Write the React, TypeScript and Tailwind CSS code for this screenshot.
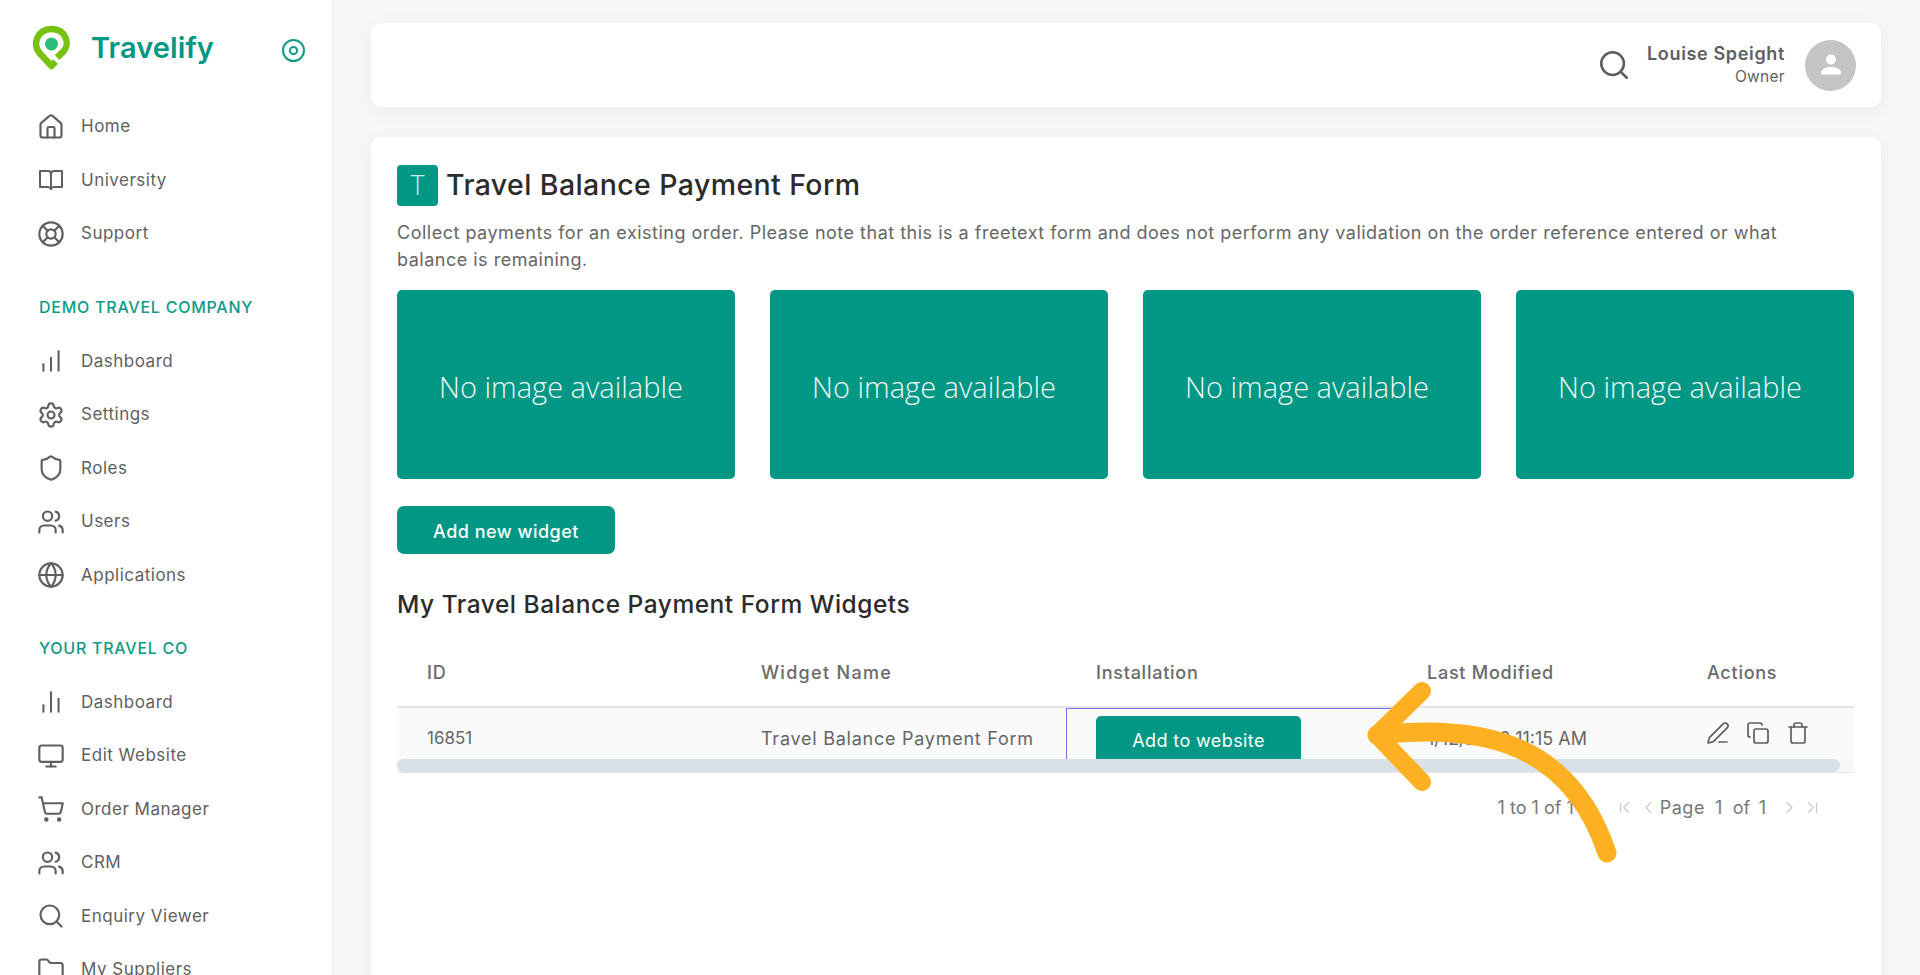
import React from "react";
import {
  House,
  LifeBuoy,
  ChartNoAxesColumn,
  ChartNoAxesColumnIncreasing,
  Settings,
  Shield,
  Users,
  Globe,
  Monitor,
  ShoppingCart,
  Search,
  Folder,
  PenLine,
  Copy,
  Trash,
  ChevronLeft,
  ChevronRight,
  ChevronFirst,
  ChevronLast,
} from "lucide-react";

function BookIcon() {
  return (
    <svg width="28" height="28" viewBox="0 0 28 28" fill="none" stroke="currentColor" strokeWidth="2" strokeLinejoin="round" strokeLinecap="round">
      <path d="M3 5h8c1.800 0 3 1.200 3 3v15c-.6-1.200-1.600-2-3-2H3z" />
      <path d="M25 5h-8c-1.800 0-3 1.200-3 3v15c.6-1.200 1.600-2 3-2h8z" />
    </svg>
  );
}

const NAV_ICON = { size: 28, strokeWidth: 1.85 };

function NavItem({ icon, label }: { icon: React.ReactNode; label: string }) {
  return (
    <div className="flex h-[53.5px] items-center pl-[37px] text-[#5f5f5f]">
      <span className="flex w-[44px] shrink-0 items-center">{icon}</span>
      <span className="text-[17px] tracking-[0.5px]">{label}</span>
    </div>
  );
}

function SectionTitle({ children }: { children: React.ReactNode }) {
  return (
    <div className="flex h-[53.5px] items-center pb-[2px] pl-[39px] text-[16px] font-medium tracking-[0.75px] text-[#0f9a87]">
      {children}
    </div>
  );
}

function Sidebar() {
  return (
    <aside className="h-[975px] w-[331px] shrink-0 overflow-hidden bg-white">
      <div className="flex h-[100px] items-start pl-[33px] pt-[26px]">
        <svg className="overflow-visible" width="37" height="44" viewBox="0 0 37 44" fill="none">
          <path d="M22.5 35.500 L18.5 40 L6.500 27 C-1 18 4.500 3 18.5 3 C32.500 3 38 18 30 26 L24 31.500" stroke="#76c20e" strokeWidth="6.5" strokeLinejoin="round" />
          <circle cx="18.5" cy="18" r="6.5" fill="#2dbd7a" />
        </svg>
        <span className="ml-[21px] mt-[3px] text-[29px] font-semibold leading-[38px] tracking-[0.1px] text-[#009784]">Travelify</span>
        <svg className="ml-[67px] mt-[12px]" width="25" height="25" viewBox="0 0 25 25" fill="none" stroke="#0f9a87" strokeWidth="2">
          <circle cx="12.5" cy="12.5" r="10.5" />
          <circle cx="12.5" cy="12.5" r="3.6" />
        </svg>
      </div>

      <NavItem icon={<House {...NAV_ICON} />} label="Home" />
      <NavItem icon={<BookIcon />} label="University" />
      <NavItem icon={<LifeBuoy {...NAV_ICON} />} label="Support" />

      <div className="mt-[20.500px]">
        <SectionTitle>DEMO TRAVEL COMPANY</SectionTitle>
      </div>
      <NavItem icon={<ChartNoAxesColumnIncreasing size={26} strokeWidth={1.9} className="ml-px" />} label="Dashboard" />
      <NavItem icon={<Settings {...NAV_ICON} />} label="Settings" />
      <NavItem icon={<Shield {...NAV_ICON} />} label="Roles" />
      <NavItem icon={<Users {...NAV_ICON} />} label="Users" />
      <NavItem icon={<Globe {...NAV_ICON} />} label="Applications" />

      <div className="mt-[20px]">
        <SectionTitle>YOUR TRAVEL CO</SectionTitle>
      </div>
      <NavItem icon={<ChartNoAxesColumn size={26} strokeWidth={1.9} className="ml-px" />} label="Dashboard" />
      <NavItem icon={<Monitor {...NAV_ICON} />} label="Edit Website" />
      <NavItem icon={<ShoppingCart {...NAV_ICON} />} label="Order Manager" />
      <NavItem icon={<Users {...NAV_ICON} />} label="CRM" />
      <NavItem icon={<Search {...NAV_ICON} />} label="Enquiry Viewer" />
      <NavItem icon={<Folder {...NAV_ICON} />} label="My Suppliers" />
    </aside>
  );
}

function Header() {
  return (
    <header className="flex h-[84px] items-center justify-end rounded-[10px] bg-white pr-[25px] shadow-[0_4px_20px_rgba(0,0,0,0.05)]">
      <Search size={34} strokeWidth={1.8} className="text-[#5c5c5c]" />
      <div className="ml-[16px] text-right text-[#5f5f5f]">
        <div className="text-[18px] font-semibold leading-[24px] tracking-[0.65px]">Louise Speight</div>
        <div className="text-[15.5px] leading-[22px] tracking-[0.3px]">Owner</div>
      </div>
      <div className="ml-[20px] flex h-[51px] w-[51px] items-center justify-center rounded-full bg-[#c4c4c4]">
        <svg width="26" height="26" viewBox="0 0 26 26" fill="white">
          <circle cx="13" cy="7.5" r="5" />
          <path d="M3 21c0-4 5-6 10-6s10 2 10 6c0 1-.6 1.500-1.500 1.500h-17C3.600 22.500 3 22 3 21z" />
        </svg>
      </div>
    </header>
  );
}

function ImageTile() {
  return (
    <div className="flex h-[189px] items-center justify-center rounded-[5px] bg-[#009784] pr-[10px] pt-[4px] text-[29px] font-light text-[#eef8f6] [font-family:'Open_Sans',sans-serif]">
      No image available
    </div>
  );
}

const HEAD_CELL = "text-[18px] font-medium tracking-[0.75px] text-[#6a6a6a]";

function WidgetTable() {
  return (
    <div className="relative mt-[20px]">
      <div className="flex h-[70px] items-center border-b-2 border-[#e6e6e6] pl-[30px]">
        <div className={`w-[334px] ${HEAD_CELL}`}>ID</div>
        <div className="w-[335px] text-[18px] font-medium tracking-[1.3px] text-[#6a6a6a]">Widget Name</div>
        <div className={`w-[331px] ${HEAD_CELL}`}>Installation</div>
        <div className={`w-[280px] ${HEAD_CELL}`}>Last Modified</div>
        <div className={HEAD_CELL}>Actions</div>
      </div>
      <div className="relative flex h-[65px] overflow-hidden border-b border-[#e6e6e6] bg-[#fafafa] text-[18px] text-[#666666]">
        <div className="flex h-[60px] w-[364px] items-center pl-[30px] text-[17px]">16851</div>
        <div className="flex h-[60px] w-[305px] items-center tracking-[0.75px]">Travel Balance Payment Form</div>
        <div className="h-[80px] w-[331px] border border-[#7b6fe8] pl-[29px] pt-[7px]">
          <div className="flex h-[48px] w-[205px] items-center justify-center rounded-[5px] bg-[#009784] tracking-[0.4px] text-white">Add to website</div>
        </div>
        <div className="flex h-[60px] w-[280px] items-center pl-[30px]">1/12/2026 11:15 AM</div>
        <div className="flex h-[49px] items-center gap-[16px] pl-[29px] text-[#5f5f5f]">
          <PenLine size={24} strokeWidth={1.7} />
          <Copy size={24} strokeWidth={1.7} />
          <Trash size={24} strokeWidth={1.7} />
        </div>
        <div className="absolute bottom-0 left-0 right-0 h-[13px] rounded-full bg-[#f7f7f7]">
          <div className="h-full w-[1443px] rounded-full bg-[#d9e0e6]" />
        </div>
      </div>
      <div className="mt-[22px] flex h-[24px] items-center justify-end pr-[32px] text-[18px] text-[#777777]">
        <span>1 to 1 of 1</span>
        <ChevronFirst size={19} strokeWidth={1.5} className="ml-[41px] text-[#c8c8c8]" />
        <ChevronLeft size={19} strokeWidth={1.5} className="ml-[5px] text-[#c8c8c8]" />
        <span className="ml-[2px] tracking-[0.5px]">Page</span>
        <span className="ml-[10px]">1</span>
        <span className="ml-[10.500px]">of</span>
        <span className="ml-[8.500px]">1</span>
        <ChevronRight size={19} strokeWidth={1.5} className="ml-[14px] text-[#c8c8c8]" />
        <ChevronLast size={19} strokeWidth={1.5} className="ml-[4px] text-[#c8c8c8]" />
      </div>
    </div>
  );
}

function ContentCard() {
  return (
    <section className="mt-[30px] h-[900px] rounded-[10px] bg-white pl-[26px] pr-[27px] pt-[27px] shadow-[0_4px_20px_rgba(0,0,0,0.05)]">
      <div className="flex items-center">
        <div className="flex h-[41px] w-[41px] items-center justify-center rounded-[4px] bg-[#009784] text-[27px] font-light text-[#cfe9e5] [font-family:'Open_Sans',sans-serif]">
          T
        </div>
        <h1 className="ml-[8px] text-[28.5px] font-medium tracking-[0.4px] text-[#2b2b2b]">Travel Balance Payment Form</h1>
      </div>
      <p className="mt-[12px] max-w-[1450px] text-[18px] leading-[27px] tracking-[0.5px] text-[#666666]">
        Collect payments for an existing order. Please note that this is a freetext form and does not perform any validation on the order reference entered or what balance is remaining.
      </p>
      <div className="mt-[17.500px] grid grid-cols-4 gap-[35px]">
        <ImageTile />
        <ImageTile />
        <ImageTile />
        <ImageTile />
      </div>
      <button className="mt-[27px] h-[48px] w-[218px] rounded-[7px] bg-[#009784] pt-[2px] text-[18px] font-medium tracking-[0.5px] text-white">Add new widget</button>
      <h2 className="mt-[36px] text-[24.5px] font-medium leading-[28px] tracking-[0.52px] text-[#2b2b2b]">My Travel Balance Payment Form Widgets</h2>
      <WidgetTable />
    </section>
  );
}

export default function App() {
  return (
    <div className="relative flex h-[975px] overflow-hidden bg-[#f7f7f7] [font-family:Inter,sans-serif]">
      <Sidebar />
      <main className="ml-[40px] w-[1510px] pt-[23px]">
        <Header />
        <ContentCard />
      </main>
      {/* annotation arrow drawn on top of the screenshot */}
      <svg className="pointer-events-none absolute left-0 top-0" width="1920" height="975" fill="none" stroke="#fdb022" strokeWidth="18" strokeLinecap="round" strokeLinejoin="round">
        <path d="M1422 691 L1377 735 L1422 782" />
        <path d="M1377 735 C1490 722 1572 748 1607 853" strokeWidth="19" />
      </svg>
    </div>
  );
}
